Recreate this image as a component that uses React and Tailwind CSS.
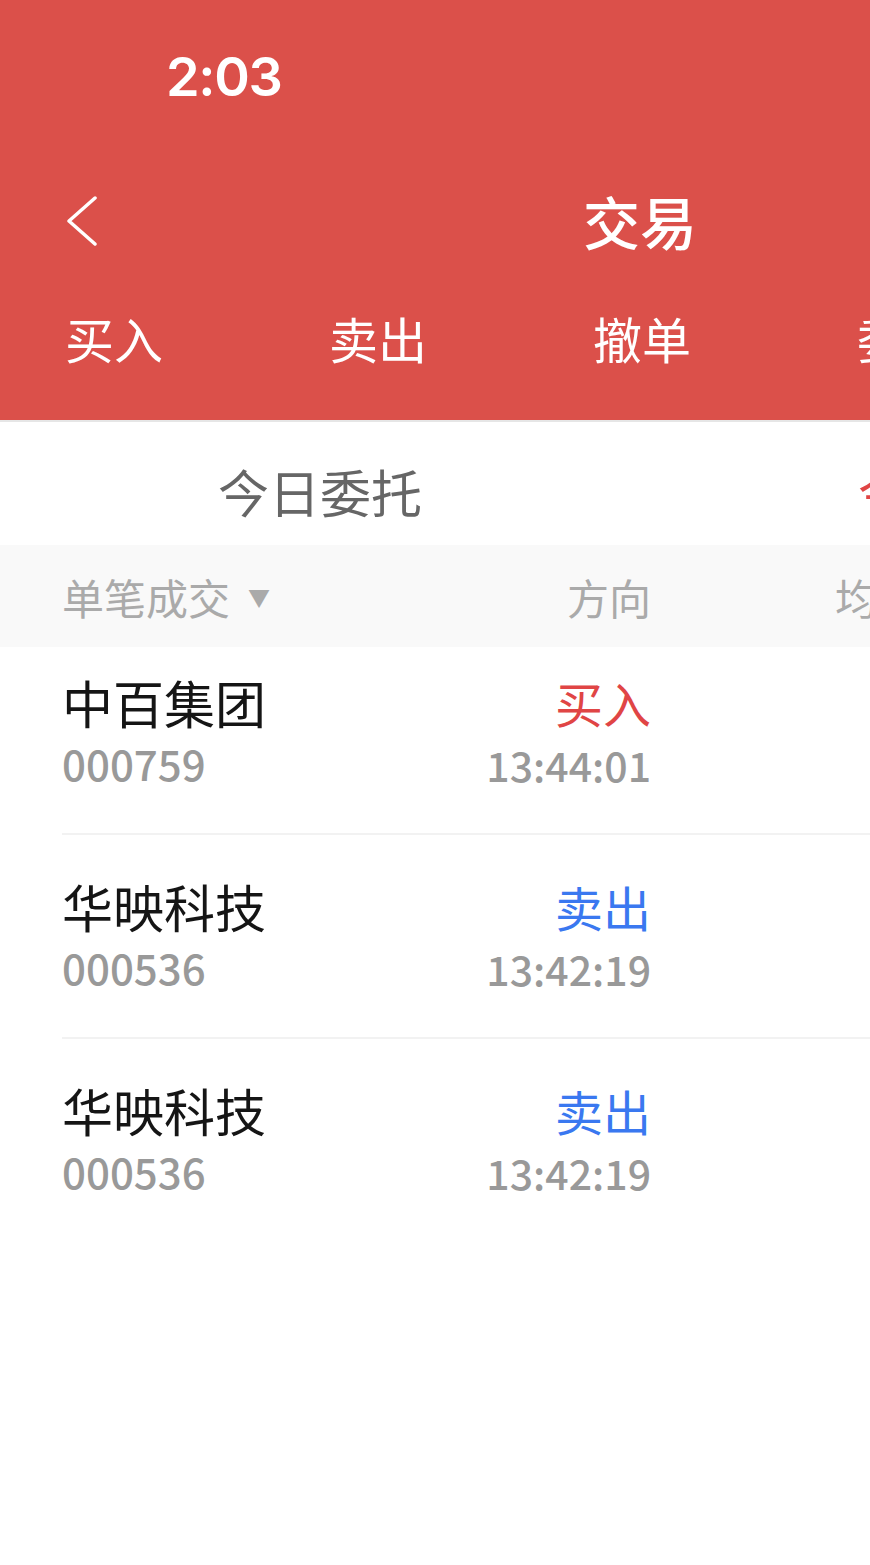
const TABS = ["买入", "卖出", "撤单", "委托"];

const ROWS = [
  { name: "中百集团", code: "000759", side: "买入", time: "13:44:01", buy: true },
  { name: "华映科技", code: "000536", side: "卖出", time: "13:42:19", buy: false },
  { name: "华映科技", code: "000536", side: "卖出", time: "13:42:19", buy: false },
];

const font = "font-['Noto_Sans_CJK_SC','Noto_Sans',sans-serif]";

export default function App() {
  return (
    <div className={`w-[870px] h-[1565px] overflow-hidden bg-white ${font}`}>
      <div className="w-[1280px]">
        {/* Header */}
        <div className="bg-[#db504a] h-[420px] text-white flex flex-col">
          <div className="h-[150px] pl-[166px] pt-[50px]">
            <span className="font-['Inter',sans-serif] font-semibold text-[54px] leading-none tracking-tight">2:03</span>
          </div>
          <div className="relative h-[140px] flex items-center">
            <svg className="ml-[66px] mt-[2px]" width="32" height="50" viewBox="0 0 32 50" fill="none">
              <path d="M29 2 L3 25 L29 48" stroke="white" strokeWidth="3.5" strokeLinecap="round" strokeLinejoin="round" />
            </svg>
            <div className="absolute left-0 right-0 text-center text-[57px] font-medium leading-none">交易</div>
          </div>
          <div className="flex pl-[65px] gap-[166px] mt-[23px]">
            {TABS.map((t) => (
              <span key={t} className="text-[49px] leading-none">{t}</span>
            ))}
          </div>
        </div>
        <div className="h-[2px] bg-[#e6e6e6]" />

        {/* Segment */}
        <div className="flex h-[123px] items-center pt-[16px]">
          <div className="flex-1 text-center text-[51px] text-[#666]">今日委托</div>
          <div className="flex-1 text-center text-[51px] text-[#e04545]">今日成交</div>
        </div>

        {/* Table header */}
        <div className="bg-[#f9f9f9] h-[102px] flex items-center pl-[62px] text-[42px] text-[#aaa]">
          <div className="w-[589px] flex items-center">
            <span>单笔成交</span>
            <span className="ml-[18px] text-[22px] text-[#aaa]">▼</span>
            <span className="ml-auto">方向</span>
          </div>
          <span className="ml-[184px]">均价</span>
        </div>

        {/* Rows */}
        <div className="pl-[62px]">
          {ROWS.map((r, i) => (
            <div
              key={i}
              className={i === 0 ? "h-[186px] flex pt-[25px]" : "h-[204px] border-t-2 border-[#f2f2f2] flex pt-[41px]"}
            >
              <div className="w-[589px] flex justify-between">
                <div className="flex flex-col">
                  <span className="text-[51px] leading-[60px] text-[#151515]">{r.name}</span>
                  <span className="text-[42px] leading-[52px] mt-[5px] text-[#999] font-medium">{r.code}</span>
                </div>
                <div className="flex flex-col items-end">
                  <span className={`text-[48px] leading-[60px] ${r.buy ? "text-[#e04545]" : "text-[#3a78f0]"}`}>{r.side}</span>
                  <span className="text-[41px] leading-[54px] mt-[5px] text-[#999] font-medium">{r.time}</span>
                </div>
              </div>
            </div>
          ))}
        </div>
      </div>
    </div>
  );
}
